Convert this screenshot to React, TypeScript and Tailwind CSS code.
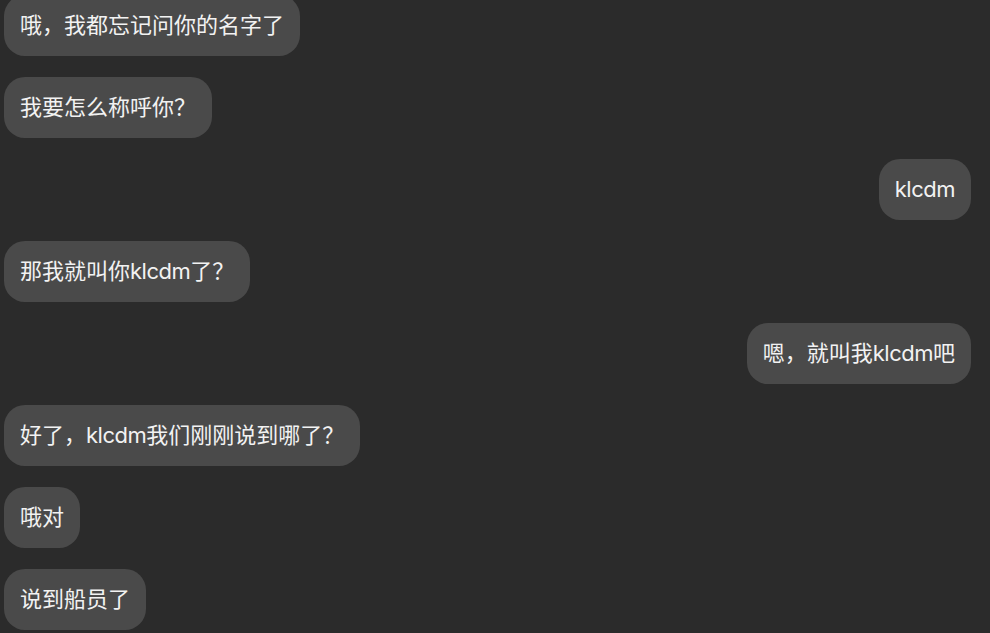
const messages = [
	{ text: "哦，我都忘记问你的名字了", me: false },
	{ text: "我要怎么称呼你？", me: false },
	{ text: "klcdm", me: true },
	{ text: "那我就叫你klcdm了？", me: false },
	{ text: "嗯，就叫我klcdm吧", me: true },
	{ text: "好了，klcdm我们刚刚说到哪了？", me: false },
	{ text: "哦对", me: false },
	{ text: "说到船员了", me: false },
]

// latin runs are a touch tighter in the original font
const renderText = (text: string) =>
	text.split(/(klcdm)/).map((part, i) =>
		part === "klcdm" ? (
			<span key={i} className="tracking-[-0.5px]">{part}</span>
		) : (
			part
		)
	)

const App = () => {
	return (
		<div
			className="w-[990px] h-[633px] overflow-hidden bg-[#2b2b2b]"
			style={{ fontFamily: 'Inter, "Noto Sans CJK SC", sans-serif' }}
		>
			<div className="flex flex-col gap-[21px] -mt-[5px] pl-[4px] pr-[19px]">
				{messages.map((m, i) => (
					<div key={i} className={`flex ${m.me ? "justify-end" : "justify-start"}`}>
						<div className="bg-[#4a4a4a] text-[#f2f2f2] text-[22px] leading-[31px] py-[15px] px-[16px] rounded-[21px] whitespace-nowrap">
							{renderText(m.text)}
						</div>
					</div>
				))}
			</div>
		</div>
	)
}

export default App
